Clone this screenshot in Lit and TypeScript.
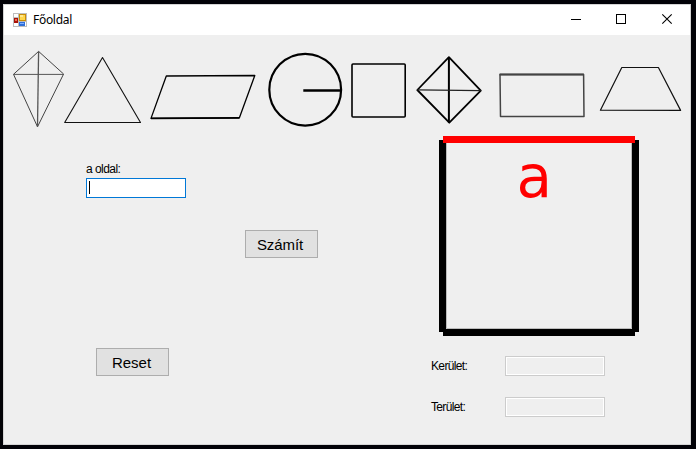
import { LitElement, html, css, svg } from "lit";
import { customElement } from "lit/decorators.js";

const TOP = 35;
const STRIP = 97;

// Each picture keeps its drawing in window coordinates; x and w give its slot in the strip.
const shapes = [
  { x: 4, w: 60, body: svg`<g stroke="#444" stroke-width="1"><path d="M38.6 51.4 13.5 74.3 37.5 126.8 63.6 74Z"/><path d="M13.5 74.4H63.5" stroke="#555"/><path d="M38.6 51.4 37.5 126.8" stroke="#555" stroke-width="1.3"/></g>` },
  { x: 64, w: 82, body: svg`<path d="M102.5 57.5 64.7 122.5H140.5Z" stroke="#111" stroke-width="1.1"/>` },
  { x: 146, w: 116, body: svg`<path d="M166.3 76 254.8 75.5 239.4 117.8 151 118.4Z" stroke-width="1.3"/><path d="M151 118.4 239.4 117.9" stroke-width="1.6"/>` },
  { x: 262, w: 84, body: svg`<circle cx="305.2" cy="89.7" r="35.9" stroke-width="2.2"/><path d="M303.3 90.6H341" stroke-width="2.5"/>` },
  { x: 346, w: 65, body: svg`<rect x="352" y="64" width="53.2" height="53" rx="1" stroke-width="1.6"/>` },
  { x: 411, w: 79, body: svg`<path d="M448.9 57.2 417.3 90 449.3 122.7 480.8 90.6Z" stroke-width="1.8"/><path d="M448.9 57V122.7" stroke-width="2"/><path d="M417.3 89.9 480.8 90.6" stroke-width="1.4" stroke="#222"/>` },
  { x: 490, w: 102, body: svg`<path d="M500 74.5 500.5 116.6H584L583.6 74.5Z" stroke="#444" stroke-width="1.5"/><path d="M499.6 74.6H583.8" stroke="#444" stroke-width="2"/>` },
  { x: 592, w: 98, body: svg`<path d="M621.8 67.5H658.4L680.6 110.4 600.4 110.2Z" stroke="#111" stroke-width="1.2"/>` },
];

@customElement("shape-strip")
export class ShapeStrip extends LitElement {
  static styles = css`
    :host { display: flex; height: 97px; }
    .pic { display: block; flex: none; overflow: visible; fill: none; stroke: #000; stroke-linejoin: round; }
  `;
  render() {
    return shapes.map(
      (s) => html`<svg class="pic" width=${s.w} height=${STRIP} viewBox="${s.x} ${TOP} ${s.w} ${STRIP}">${s.body}</svg>`
    );
  }
}

@customElement("title-bar")
export class TitleBar extends LitElement {
  static styles = css`
    :host { display: flex; align-items: center; height: 30px; background: #fff; font: 12px/16px "Noto Sans", sans-serif; color: #000; }
    .icon { flex: none; margin-left: 9px; }
    .name { flex: 1; margin-left: 6px; font-size: 12px; letter-spacing: -0.3px; }
    .controls { display: flex; margin-right: 0; }
    .control { width: 45px; height: 30px; fill: none; stroke: #000; display: block; }
  `;
  render() {
    return html`
      <svg class="icon" width="14" height="14" viewBox="0 0 14 14">
        <rect width="14" height="14" fill="#bdbdbd"/>
        <path d="M1 1H5V4H1ZM1 10H5V13H1ZM12 9H13V13H12Z" fill="#fff"/>
        <rect x="6" y="1" width="7" height="7" fill="#c98d08"/>
        <rect x="7" y="2" width="5" height="5" fill="#ffd64a"/>
        <path d="M7 2H10V4H7Z" fill="#ffe88f"/>
        <rect x="1" y="5" width="4" height="5" fill="#a81208"/>
        <rect x="2" y="6" width="2" height="2" fill="#ef6b55"/>
        <rect x="6" y="9" width="6" height="4" fill="#2f6fd8"/>
        <rect x="7" y="10" width="4" height="1" fill="#80b0ff"/>
      </svg>
      <span class="name">Főoldal</span>
      <span class="controls">
        <svg class="control" viewBox="0 0 45 30"><path d="M16 14.5H26"/></svg>
        <svg class="control" viewBox="0 0 45 30"><rect x="16.5" y="9.5" width="9" height="9"/></svg>
        <svg class="control" viewBox="0 0 45 30"><path d="M17.3 9.3 26.7 18.7M26.7 9.3 17.3 18.7" stroke-width="1.1"/></svg>
      </span>
    `;
  }
}

@customElement("app-root")
export class AppRoot extends LitElement {
  static styles = css`
    :host { display: block; box-sizing: border-box; width: 696px; height: 450px; padding: 4px 5px 4px 3px; background: #020207; border-bottom: 1px solid #fff; font-family: "Liberation Sans", Arial, sans-serif; color: #000; }
    .window { box-sizing: border-box; width: 688px; height: 441px; border: 1px solid #d5d5d5; background: #efefef; overflow: hidden; }
    .body { display: grid; grid-template-columns: 427px 1fr; }
    .inputs { display: flex; flex-direction: column; align-items: flex-start; padding-top: 30px; }
    .label { font-size: 12px; line-height: 14px; }
    .side { margin-left: 82px; letter-spacing: -0.55px; }
    .field { box-sizing: border-box; width: 100px; height: 20px; border: 1px solid #0078d7; background: #fff; margin: 2px 0 0 82px; padding: 2px; }
    .caret { width: 1px; height: 13px; background: #000; }
    .button { box-sizing: border-box; width: 73px; height: 28px; border: 1px solid #adadad; background: #e1e1e1; font-size: 15px; line-height: 27px; text-align: center; }
    .calc { margin: 32px 0 0 241px; letter-spacing: -0.1px; padding-right: 3px; }
    .reset { margin: 90px 0 0 92px; padding-right: 2px; }
    .figure { display: block; margin-left: 8px; }
    .letter { font: 58px "DejaVu Sans", sans-serif; fill: #f00; }
    .row { display: flex; align-items: center; height: 20px; }
    .first { margin-top: 20px; }
    .second { margin-top: 21px; }
    .result { width: 74px; letter-spacing: -0.65px; }
    .out { box-sizing: border-box; width: 100px; height: 20px; border: 1px solid #ccc; box-shadow: inset 0 0 0 1px #fff; }
  `;
  render() {
    return html`
      <div class="window">
        <title-bar></title-bar>
        <shape-strip></shape-strip>
        <div class="body">
          <div class="inputs">
            <div class="label side">a oldal:</div>
            <div class="field"><div class="caret"></div></div>
            <div class="button calc">Számít</div>
            <div class="button reset">Reset</div>
          </div>
          <div class="results">
            <svg class="figure" width="202" height="204" viewBox="439 132 202 204">
              <path d="M446.5 143V328.5H631.5V143" fill="none" stroke="#bbb"/>
              <path d="M439 140H446V329H632V140H639V332H635V336H443V332H439Z"/>
              <path d="M443 136H635V143H443Z" fill="#f00"/>
              <text class="letter" x="516.5" y="197.3">a</text>
            </svg>
            <div class="row first"><span class="label result">Kerület:</span><span class="out"></span></div>
            <div class="row second"><span class="label result">Terület:</span><span class="out"></span></div>
          </div>
        </div>
      </div>
    `;
  }
}
